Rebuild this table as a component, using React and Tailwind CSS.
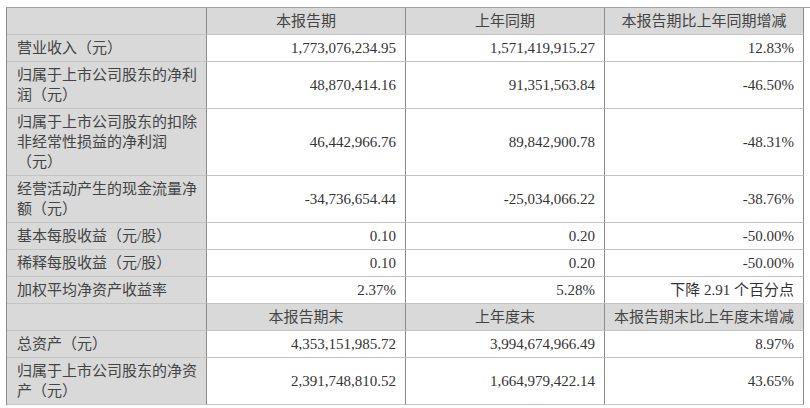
import React from "react";

const rows = [
  { label: ["营业收入（元）"], cur: "1,773,076,234.95", prev: "1,571,419,915.27", diff: "12.83%" },
  { label: ["归属于上市公司股东的净利", "润（元）"], cur: "48,870,414.16", prev: "91,351,563.84", diff: "-46.50%" },
  { label: ["归属于上市公司股东的扣除", "非经常性损益的净利润", "（元）"], cur: "46,442,966.76", prev: "89,842,900.78", diff: "-48.31%" },
  { label: ["经营活动产生的现金流量净", "额（元）"], cur: "-34,736,654.44", prev: "-25,034,066.22", diff: "-38.76%" },
  { label: ["基本每股收益（元/股）"], cur: "0.10", prev: "0.20", diff: "-50.00%" },
  { label: ["稀释每股收益（元/股）"], cur: "0.10", prev: "0.20", diff: "-50.00%" },
  { label: ["加权平均净资产收益率"], cur: "2.37%", prev: "5.28%", diff: "下降 2.91 个百分点" },
];

const rows2 = [
  { label: ["总资产（元）"], cur: "4,353,151,985.72", prev: "3,994,674,966.49", diff: "8.97%" },
  { label: ["归属于上市公司股东的净资", "产（元）"], cur: "2,391,748,810.52", prev: "1,664,979,422.14", diff: "43.65%" },
];

const cell = "border-r border-b border-r-[#8c8c8c] border-b-[#c4c4c4] py-[3px] leading-[20px] flex items-center";

const HeaderRow = ({ cols }) => (
  <>
    <div className={`${cell} bg-[#d9d9d9] border-b-[#a6a6a6]`}>&nbsp;</div>
    {cols.map((c) => (
      <div key={c} className={`${cell} bg-[#d9d9d9] border-b-[#a6a6a6] justify-center text-[#444444]`}>
        {c}
      </div>
    ))}
  </>
);

const DataRow = ({ row }) => (
  <>
    <div className={`${cell} bg-[#d9d9d9] pl-[10px] text-[#444444]`}>
      <div>
        {row.label.map((l, i) => (
          <div key={i}>{l}</div>
        ))}
      </div>
    </div>
    <div className={`${cell} justify-end pr-[9px]`}>{row.cur}</div>
    <div className={`${cell} justify-end pr-[9px]`}>{row.prev}</div>
    <div className={`${cell} justify-end pr-[9px]`}>{row.diff}</div>
  </>
);

export default function App() {
  return (
    <div className="w-[810px] h-[408px] bg-white pt-[7px] pl-[6px] overflow-hidden">
      <div
        className="grid grid-cols-[200px_199px_199px_199px] border-l border-t border-l-[#8c8c8c] border-t-[#a6a6a6] text-[15px] text-[#333333]"
        style={{ fontFamily: '"Liberation Serif", "Noto Sans CJK SC", serif' }}
      >
        <HeaderRow cols={["本报告期", "上年同期", "本报告期比上年同期增减"]} />
        {rows.map((r) => (
          <DataRow key={r.label[0]} row={r} />
        ))}
        <HeaderRow cols={["本报告期末", "上年度末", "本报告期末比上年度末增减"]} />
        {rows2.map((r) => (
          <DataRow key={r.label[0]} row={r} />
        ))}
      </div>
    </div>
  );
}
